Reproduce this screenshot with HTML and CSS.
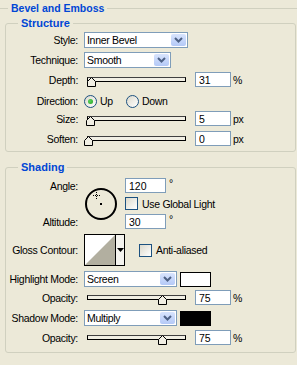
FILE: index.html
```html
<!DOCTYPE html>
<html lang="en">
<head>
    <meta charset="UTF-8">
    <title>Bevel and Emboss</title>
    <link rel="stylesheet" href="styles.css">
</head>
<body>

<div class="section-title"><span>Bevel and Emboss</span></div>

<!-- Structure -->
<div class="group structure">
    <div class="group-title">Structure</div>

    <div class="row mt2">
        <span class="label">Style:</span>
        <div class="select select-style">
            <span>Inner Bevel</span>
            <span class="drop"><svg width="13" height="10" viewBox="0 0 13 10"><polyline points="3,3 6.5,6.5 10,3" fill="none" stroke="#4D6185" stroke-width="2"/></svg></span>
        </div>
    </div>

    <div class="row">
        <span class="label">Technique:</span>
        <div class="select select-technique">
            <span>Smooth</span>
            <span class="drop"><svg width="13" height="10" viewBox="0 0 13 10"><polyline points="3,3 6.5,6.5 10,3" fill="none" stroke="#4D6185" stroke-width="2"/></svg></span>
        </div>
    </div>

    <div class="row">
        <span class="label">Depth:</span>
        <div class="slider">
            <div class="track"></div>
            <span class="thumb" style="left: 3px"><svg width="9" height="10" viewBox="0 0 9 10"><path d="M0.5 9.5 V4.5 L4.5 0.5 L8.5 4.5 V9.5 Z" fill="#F1EFE4" stroke="#000"/></svg></span>
        </div>
        <input class="field" type="text" value="31">
        <span class="unit">%</span>
    </div>

    <div class="row row-radio mt6">
        <span class="label">Direction:</span>
        <span class="radio-option"><span class="radio checked"></span>Up</span>
        <span class="radio-option"><span class="radio"></span>Down</span>
    </div>

    <div class="row mt2">
        <span class="label">Size:</span>
        <div class="slider">
            <div class="track"></div>
            <span class="thumb" style="left: 2px"><svg width="9" height="10" viewBox="0 0 9 10"><path d="M0.5 9.5 V4.5 L4.5 0.5 L8.5 4.5 V9.5 Z" fill="#F1EFE4" stroke="#000"/></svg></span>
        </div>
        <input class="field" type="text" value="5">
        <span class="unit">px</span>
    </div>

    <div class="row mt5">
        <span class="label">Soften:</span>
        <div class="slider">
            <div class="track"></div>
            <span class="thumb" style="left: 0px"><svg width="9" height="10" viewBox="0 0 9 10"><path d="M0.5 9.5 V4.5 L4.5 0.5 L8.5 4.5 V9.5 Z" fill="#F1EFE4" stroke="#000"/></svg></span>
        </div>
        <input class="field" type="text" value="0">
        <span class="unit">px</span>
    </div>
</div>

<!-- Shading -->
<div class="group shading">
    <div class="group-title">Shading</div>

    <div class="angle-grid">
        <span class="label angle-label">Angle:</span>
        <div class="dial">
            <svg width="34" height="32" viewBox="0 0 34 32">
                <circle cx="17" cy="16" r="15" fill="none" stroke="#000" stroke-width="2"/>
                <rect x="16" y="15" width="2" height="2" fill="#000"/>
                <g stroke="#000" stroke-width="1" stroke-dasharray="1 1">
                    <line x1="9" y1="7.5" x2="16" y2="7.5"/>
                    <line x1="12.5" y1="4" x2="12.5" y2="11"/>
                </g>
            </svg>
        </div>
        <div class="angle-value">
            <input class="field field-wide" type="text" value="120">
            <span class="degree">°</span>
        </div>
        <div class="check-option global-light"><span class="check"></span>Use Global Light</div>
        <span class="label altitude-label">Altitude:</span>
        <div class="altitude-value">
            <input class="field field-wide" type="text" value="30">
            <span class="degree">°</span>
        </div>
    </div>

    <div class="row row-contour mt5">
        <span class="label">Gloss Contour:</span>
        <div class="contour">
            <svg width="30" height="30" viewBox="0 0 30 30">
                <rect width="30" height="30" fill="#fff"/>
                <polygon points="0,30 30,0 30,30" fill="#B2AFA0"/>
            </svg>
            <span class="contour-arrow"><svg width="7" height="4" viewBox="0 0 7 4"><polygon points="0,0 7,0 3.5,4" fill="#000"/></svg></span>
        </div>
        <div class="check-option anti-alias"><span class="check"></span>Anti-aliased</div>
    </div>

    <div class="row mt5">
        <span class="label">Highlight Mode:</span>
        <div class="select select-mode">
            <span>Screen</span>
            <span class="drop"><svg width="13" height="10" viewBox="0 0 13 10"><polyline points="3,3 6.5,6.5 10,3" fill="none" stroke="#4D6185" stroke-width="2"/></svg></span>
        </div>
        <span class="swatch swatch-white"></span>
    </div>

    <div class="row mt3">
        <span class="label">Opacity:</span>
        <div class="slider">
            <div class="track"></div>
            <span class="thumb" style="left: 74px"><svg width="9" height="10" viewBox="0 0 9 10"><path d="M0.5 9.5 V4.5 L4.5 0.5 L8.5 4.5 V9.5 Z" fill="#F1EFE4" stroke="#000"/></svg></span>
        </div>
        <input class="field" type="text" value="75">
        <span class="unit">%</span>
    </div>

    <div class="row mt5">
        <span class="label">Shadow Mode:</span>
        <div class="select select-mode">
            <span>Multiply</span>
            <span class="drop"><svg width="13" height="10" viewBox="0 0 13 10"><polyline points="3,3 6.5,6.5 10,3" fill="none" stroke="#4D6185" stroke-width="2"/></svg></span>
        </div>
        <span class="swatch swatch-black"></span>
    </div>

    <div class="row">
        <span class="label">Opacity:</span>
        <div class="slider">
            <div class="track"></div>
            <span class="thumb" style="left: 74px"><svg width="9" height="10" viewBox="0 0 9 10"><path d="M0.5 9.5 V4.5 L4.5 0.5 L8.5 4.5 V9.5 Z" fill="#F1EFE4" stroke="#000"/></svg></span>
        </div>
        <input class="field" type="text" value="75">
        <span class="unit">%</span>
    </div>
</div>

</body>
</html>
```

FILE: styles.css
```css
html, body {
    margin: 0;
    padding: 0;
}

/* General */
body {
    width: 297px;
    height: 365px;
    overflow: hidden;
    background: #ECE9D8;
    color: #000;
    font-family: "Liberation Sans", Arial, sans-serif;
    font-size: 10.5px;
    letter-spacing: -0.3px;
}

/* Section header with rule */
.section-title {
    display: flex;
    align-items: center;
    height: 16px;
    color: #0046D5;
    font-weight: bold;
    letter-spacing: 0;
}

.section-title::before {
    content: "";
    width: 8px;
    border-top: 1px solid #D0D0BF;
}

.section-title::after {
    content: "";
    flex: 1;
    border-top: 1px solid #D0D0BF;
}

.section-title span {
    padding: 0 3px;
}

/* Group boxes */
.group {
    margin: 0 1px 0 5px;
    border: 1px solid #D0D0BF;
    border-radius: 3px;
}

.structure {
    margin-top: 7px;
    padding-bottom: 5px;
}

.shading {
    margin-top: 15px;
    padding-bottom: 7px;
}

.group-title {
    display: table;
    margin: -7px 0 0 12px;
    padding: 0 3px;
    background: #ECE9D8;
    color: #0046D5;
    font-size: 11px;
    font-weight: bold;
    line-height: 13px;
    letter-spacing: 0;
}

/* Rows */
.row {
    display: flex;
    align-items: center;
    margin-top: 4px;
}

.mt2 { margin-top: 2px; }
.mt3 { margin-top: 3px; }
.mt5 { margin-top: 5px; }
.mt6 { margin-top: 6px; }

.label {
    flex: none;
    width: 72px;
    margin-right: 6px;
    text-align: right;
    white-space: nowrap;
}

/* Dropdowns */
.select {
    display: flex;
    align-items: center;
    height: 16px;
    box-sizing: border-box;
    padding-left: 2px;
    border: 1px solid #7F9DB9;
    background: #fff;
}

.select-style { width: 104px; }
.select-technique { width: 87px; }
.select-mode { width: 93px; }

.drop {
    display: flex;
    align-items: center;
    justify-content: center;
    margin-left: auto;
    margin-right: 1px;
    width: 15px;
    height: 12px;
    border-radius: 2px;
    background: linear-gradient(#D8E4FD, #B4C9F7);
}

/* Sliders */
.slider {
    position: relative;
    flex: none;
    display: flex;
    align-items: center;
    width: 103px;
    height: 15px;
}

.track {
    margin-left: 3px;
    width: 99px;
    height: 5px;
    box-sizing: border-box;
    border: 1px solid #000;
    border-top-color: #404040;
    background: #F1EFE4;
}

.thumb {
    position: absolute;
    top: 5px;
    display: block;
    width: 9px;
    height: 10px;
}

.thumb svg {
    display: block;
}

/* Text fields */
.field {
    width: 36px;
    height: 15px;
    box-sizing: border-box;
    margin: 0 0 0 8px;
    padding: 0 3px;
    border: 1px solid #7F9DB9;
    background: #fff;
    font: inherit;
    letter-spacing: 0;
    color: #000;
    outline: none;
}

.field-wide {
    width: 41px;
    margin-left: 0;
}

.unit {
    margin-left: 2px;
}

/* Radio buttons */
.row-radio {
    height: 16px;
}

.radio-option {
    display: flex;
    align-items: center;
    width: 42px;
}

.radio {
    position: relative;
    width: 13px;
    height: 13px;
    box-sizing: border-box;
    margin-right: 3px;
    border: 1px solid #1C5180;
    border-radius: 50%;
    background: linear-gradient(135deg, #DCD9CC, #fff);
}

.radio.checked::after {
    content: "";
    position: absolute;
    left: 3px;
    top: 3px;
    width: 5px;
    height: 5px;
    border-radius: 50%;
    background: radial-gradient(circle at 40% 40%, #5BD35B, #21A121);
}

/* Checkboxes */
.check-option {
    display: flex;
    align-items: center;
}

.check {
    width: 13px;
    height: 13px;
    box-sizing: border-box;
    margin-right: 4px;
    border: 1px solid #1C5180;
    background: linear-gradient(135deg, #DCD9CC, #fff);
}

/* Angle dial */
.angle-grid {
    display: grid;
    grid-template-columns: 78px 41px 1fr;
    grid-template-rows: 15px 13px 15px;
    row-gap: 4px;
    margin-top: 4px;
    align-items: center;
}

.angle-label { grid-column: 1; grid-row: 1; }
.altitude-label { grid-column: 1; grid-row: 3; }

.dial {
    grid-column: 2;
    grid-row: 1 / 4;
    height: 32px;
}

.dial svg {
    display: block;
}

.angle-value,
.altitude-value {
    grid-column: 3;
    display: flex;
    height: 15px;
}

.angle-value { grid-row: 1; }
.altitude-value { grid-row: 3; }
.global-light { grid-column: 3; grid-row: 2; }

.degree {
    margin-left: 3px;
    line-height: 10px;
}

/* Contour picker */
.row-contour {
    height: 32px;
}

.contour {
    display: flex;
    width: 41px;
    height: 32px;
    box-sizing: border-box;
    border: 1px solid #000;
    background: #fff;
}

.contour svg {
    display: block;
}

.contour-arrow {
    display: flex;
    align-items: center;
    justify-content: center;
    flex: 1;
    border-left: 1px solid #000;
    background: #F4F3EE;
}

.anti-alias {
    margin-left: 14px;
}

/* Colour swatches */
.swatch {
    width: 31px;
    height: 15px;
    box-sizing: border-box;
    margin-left: 3px;
    border: 1px solid #000;
}

.swatch-white { background: #fff; }
.swatch-black { background: #000; }
```
